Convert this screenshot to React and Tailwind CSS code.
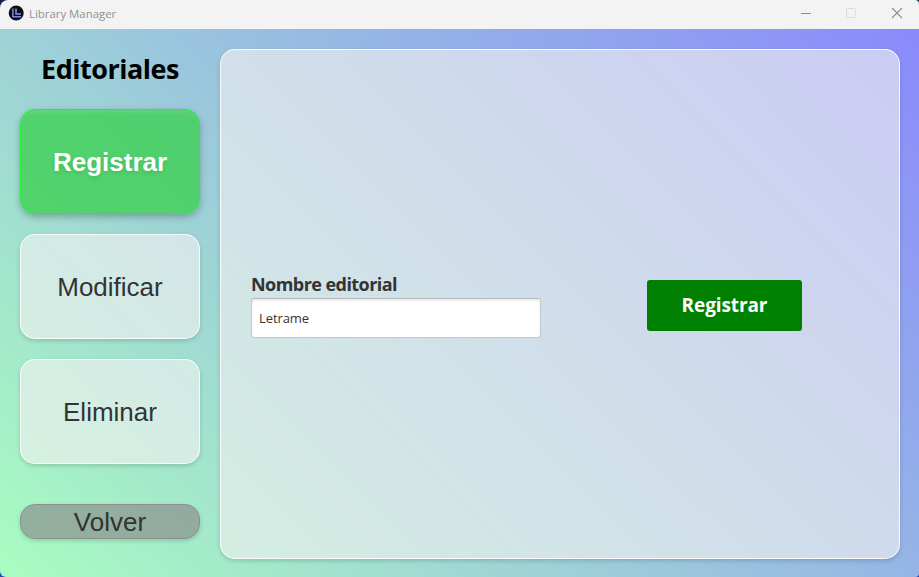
const sideFont = "font-['Liberation_Sans',Arial,sans-serif]";

function TitleBar() {
  return (
    <header className="flex h-[29px] shrink-0 items-center bg-[#f3f3f3] pl-[8px] font-['Open_Sans','Noto_Sans',sans-serif]">
      <svg width="16" height="16" viewBox="0 0 16 16" className="mb-[3px]">
        <circle cx="8.2" cy="8" r="7.5" fill="#0b0d12" />
        <path d="M4.9 3.5V11.8H13" stroke="#7688ea" strokeWidth="1.5" fill="none" />
        <path d="M8 3.5V9H13" stroke="#8496f6" strokeWidth="1.5" fill="none" />
      </svg>
      <span className="mb-[2px] ml-[5px] w-[88px] whitespace-nowrap text-[11.4px] text-[#919191]">
        Library Manager
      </span>
      <svg width="110" height="20" viewBox="0 0 110 20" className="mr-[12px] mb-[3px] ml-auto" fill="none">
        <path d="M4 10.5H14" stroke="#8e8e8e" />
        <rect x="49.5" y="5.5" width="9" height="9" rx="1" stroke="#dddddd" />
        <path d="M95 5L105 15M105 5L95 15" stroke="#8e8e8e" strokeWidth="1.1" />
      </svg>
    </header>
  );
}

function SideButton({ children }) {
  return (
    <button className={`${sideFont} h-[105px] w-full rounded-[15px] border border-white/85 bg-[#f0f0f0]/63 pt-[2px] text-[26px] text-[#333333] shadow-[0_2px_4px_rgba(0,0,0,0.16)]`}>
      {children}
    </button>
  );
}

export default function App() {
  return (
    <div className="h-[577px] w-[919px] bg-[linear-gradient(#10204a,#2a44c0)]">
      <div className="flex h-full flex-col overflow-hidden rounded-tl-[8px] rounded-tr-[4px] rounded-br-[4px] rounded-bl-[6px]">
        <TitleBar />
        <main className="flex flex-1 bg-[linear-gradient(45deg,#a9fdc0,#8a8afc)] pt-[20px] pr-[19px] pb-[18px] pl-[20px] font-['Open_Sans','Noto_Sans',sans-serif]">
          <aside className="flex w-[180px] flex-col">
            <h1 className="flex h-[40px] items-center justify-center whitespace-nowrap text-[27px] font-bold tracking-[-0.5px] text-black">
              Editoriales
            </h1>
            <div className="mt-[20px] flex flex-col gap-[20px]">
              <button className={`${sideFont} h-[105px] w-full rounded-[15px] border border-[#25ee3c] bg-[#2fd040]/70 pt-[2px] text-[26px] font-bold text-white shadow-[0_3px_7px_rgba(0,0,0,0.26),inset_0_5px_5px_-2px_rgba(255,255,255,0.1)] [text-shadow:0_2px_4px_rgba(0,0,0,0.12)]`}>
                Registrar
              </button>
              <SideButton>Modificar</SideButton>
              <SideButton>Eliminar</SideButton>
            </div>
            <button className={`${sideFont} mt-[40px] flex h-[35px] w-full items-center justify-center rounded-[15px] border border-[#8c908e] bg-[#888888]/65 pt-[2px] text-[26px] text-[#333333] shadow-[0_2px_4px_rgba(0,0,0,0.16)]`}>
              Volver
            </button>
          </aside>
          <section className="ml-[20px] flex h-[510px] w-[680px] items-start rounded-[15px] border border-white/85 bg-[#f0f0f0]/64 pt-[221px] pl-[30px] shadow-[0_2px_4px_rgba(0,0,0,0.16)]">
            <div className="w-[290px]">
              <label htmlFor="nombre" className="flex h-[27px] items-start whitespace-nowrap text-[18px] leading-[26px] font-bold tracking-[-0.55px] text-[#333333]">
                Nombre editorial
              </label>
              <input
                id="nombre"
                defaultValue="Letrame"
                className="block h-[40px] w-full rounded-[3px] border border-[#c4c8ca] border-t-[#b4b8ba] bg-white px-[7px] text-[13px] tracking-[-0.1px] text-[#333333] shadow-[inset_0_2px_2px_rgba(0,0,0,0.08)] outline-none"
              />
            </div>
            <button className="mt-[9px] ml-[106px] h-[51px] w-[155px] rounded-[3px] bg-[#008000] text-[19px] font-bold tracking-[-0.1px] text-white">
              Registrar
            </button>
          </section>
        </main>
      </div>
    </div>
  );
}
